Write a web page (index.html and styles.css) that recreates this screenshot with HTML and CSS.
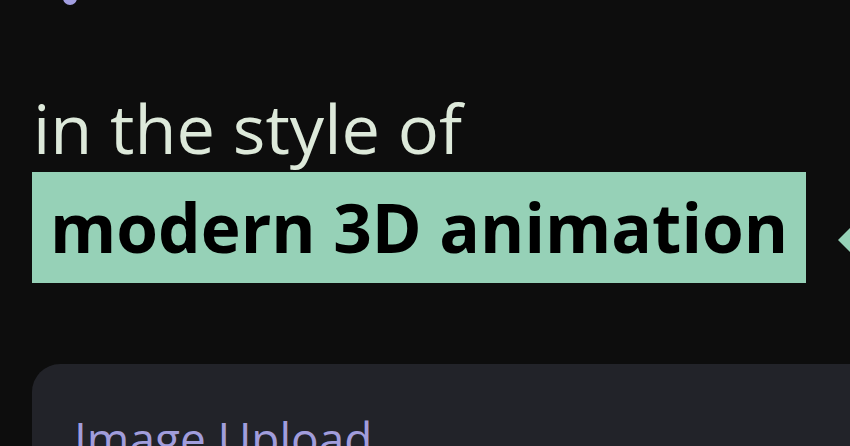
FILE: index.html
```html
<!DOCTYPE html>
<html>
<head>
<meta charset="utf-8">
<link rel="stylesheet" href="styles.css">
</head>
<body>
<div class="page">
  <span class="blob"></span>
  <h1 class="title">
    <span class="line1">in the style of</span>
    <span class="hl-row"><span class="hl">modern 3D animation</span><span class="pointer"></span></span>
  </h1>
  <section class="card">
    <h2 class="card-title">Image Upload</h2>
  </section>
</div>
</body>
</html>
```
FILE: styles.css
```css
html, body { margin: 0; padding: 0; }
body {
  background: #0d0d0d;
  width: 850px;
  height: 446px;
  overflow: hidden;
  font-family: "Open Sans", "Noto Sans", sans-serif;
}
.page {
  position: relative;
  padding: 0 0 0 32px;
  height: 446px;
  overflow: hidden;
}
.blob {
  position: absolute;
  left: 63px;
  top: -9px;
  width: 14px;
  height: 14px;
  border-radius: 50%;
  background: #a29ee0;
}
.title {
  margin: 0;
  padding-top: 83px;
  display: flex;
  flex-direction: column;
  align-items: flex-start;
}
.line1 {
  display: block;
  color: #dde9da;
  font-weight: 400;
  font-size: 68.5px;
  line-height: 89px;
  padding-left: 1px;
}
.hl-row {
  display: flex;
  align-items: center;
  width: 818px;
  position: relative;
}
.hl {
  display: block;
  background: #96d1b7;
  color: #000;
  font-weight: 700;
  font-size: 67.5px;
  line-height: 111px;
  padding: 0 18px;
  height: 111px;
}
.pointer {
  position: absolute;
  left: 811px;
  top: 68px;
  width: 24px;
  height: 24px;
  background: #96d1b7;
  transform: translate(0, -50%) rotate(45deg);
}
.card {
  margin-top: 81px;
  background: #222329;
  border-radius: 28px 0 0 0;
  width: 860px;
  height: 200px;
  padding: 44px 0 0 42px;
}
.card-title {
  margin: 0;
  color: #a19ddc;
  font-weight: 400;
  font-size: 46px;
  line-height: 60px;
}
```
